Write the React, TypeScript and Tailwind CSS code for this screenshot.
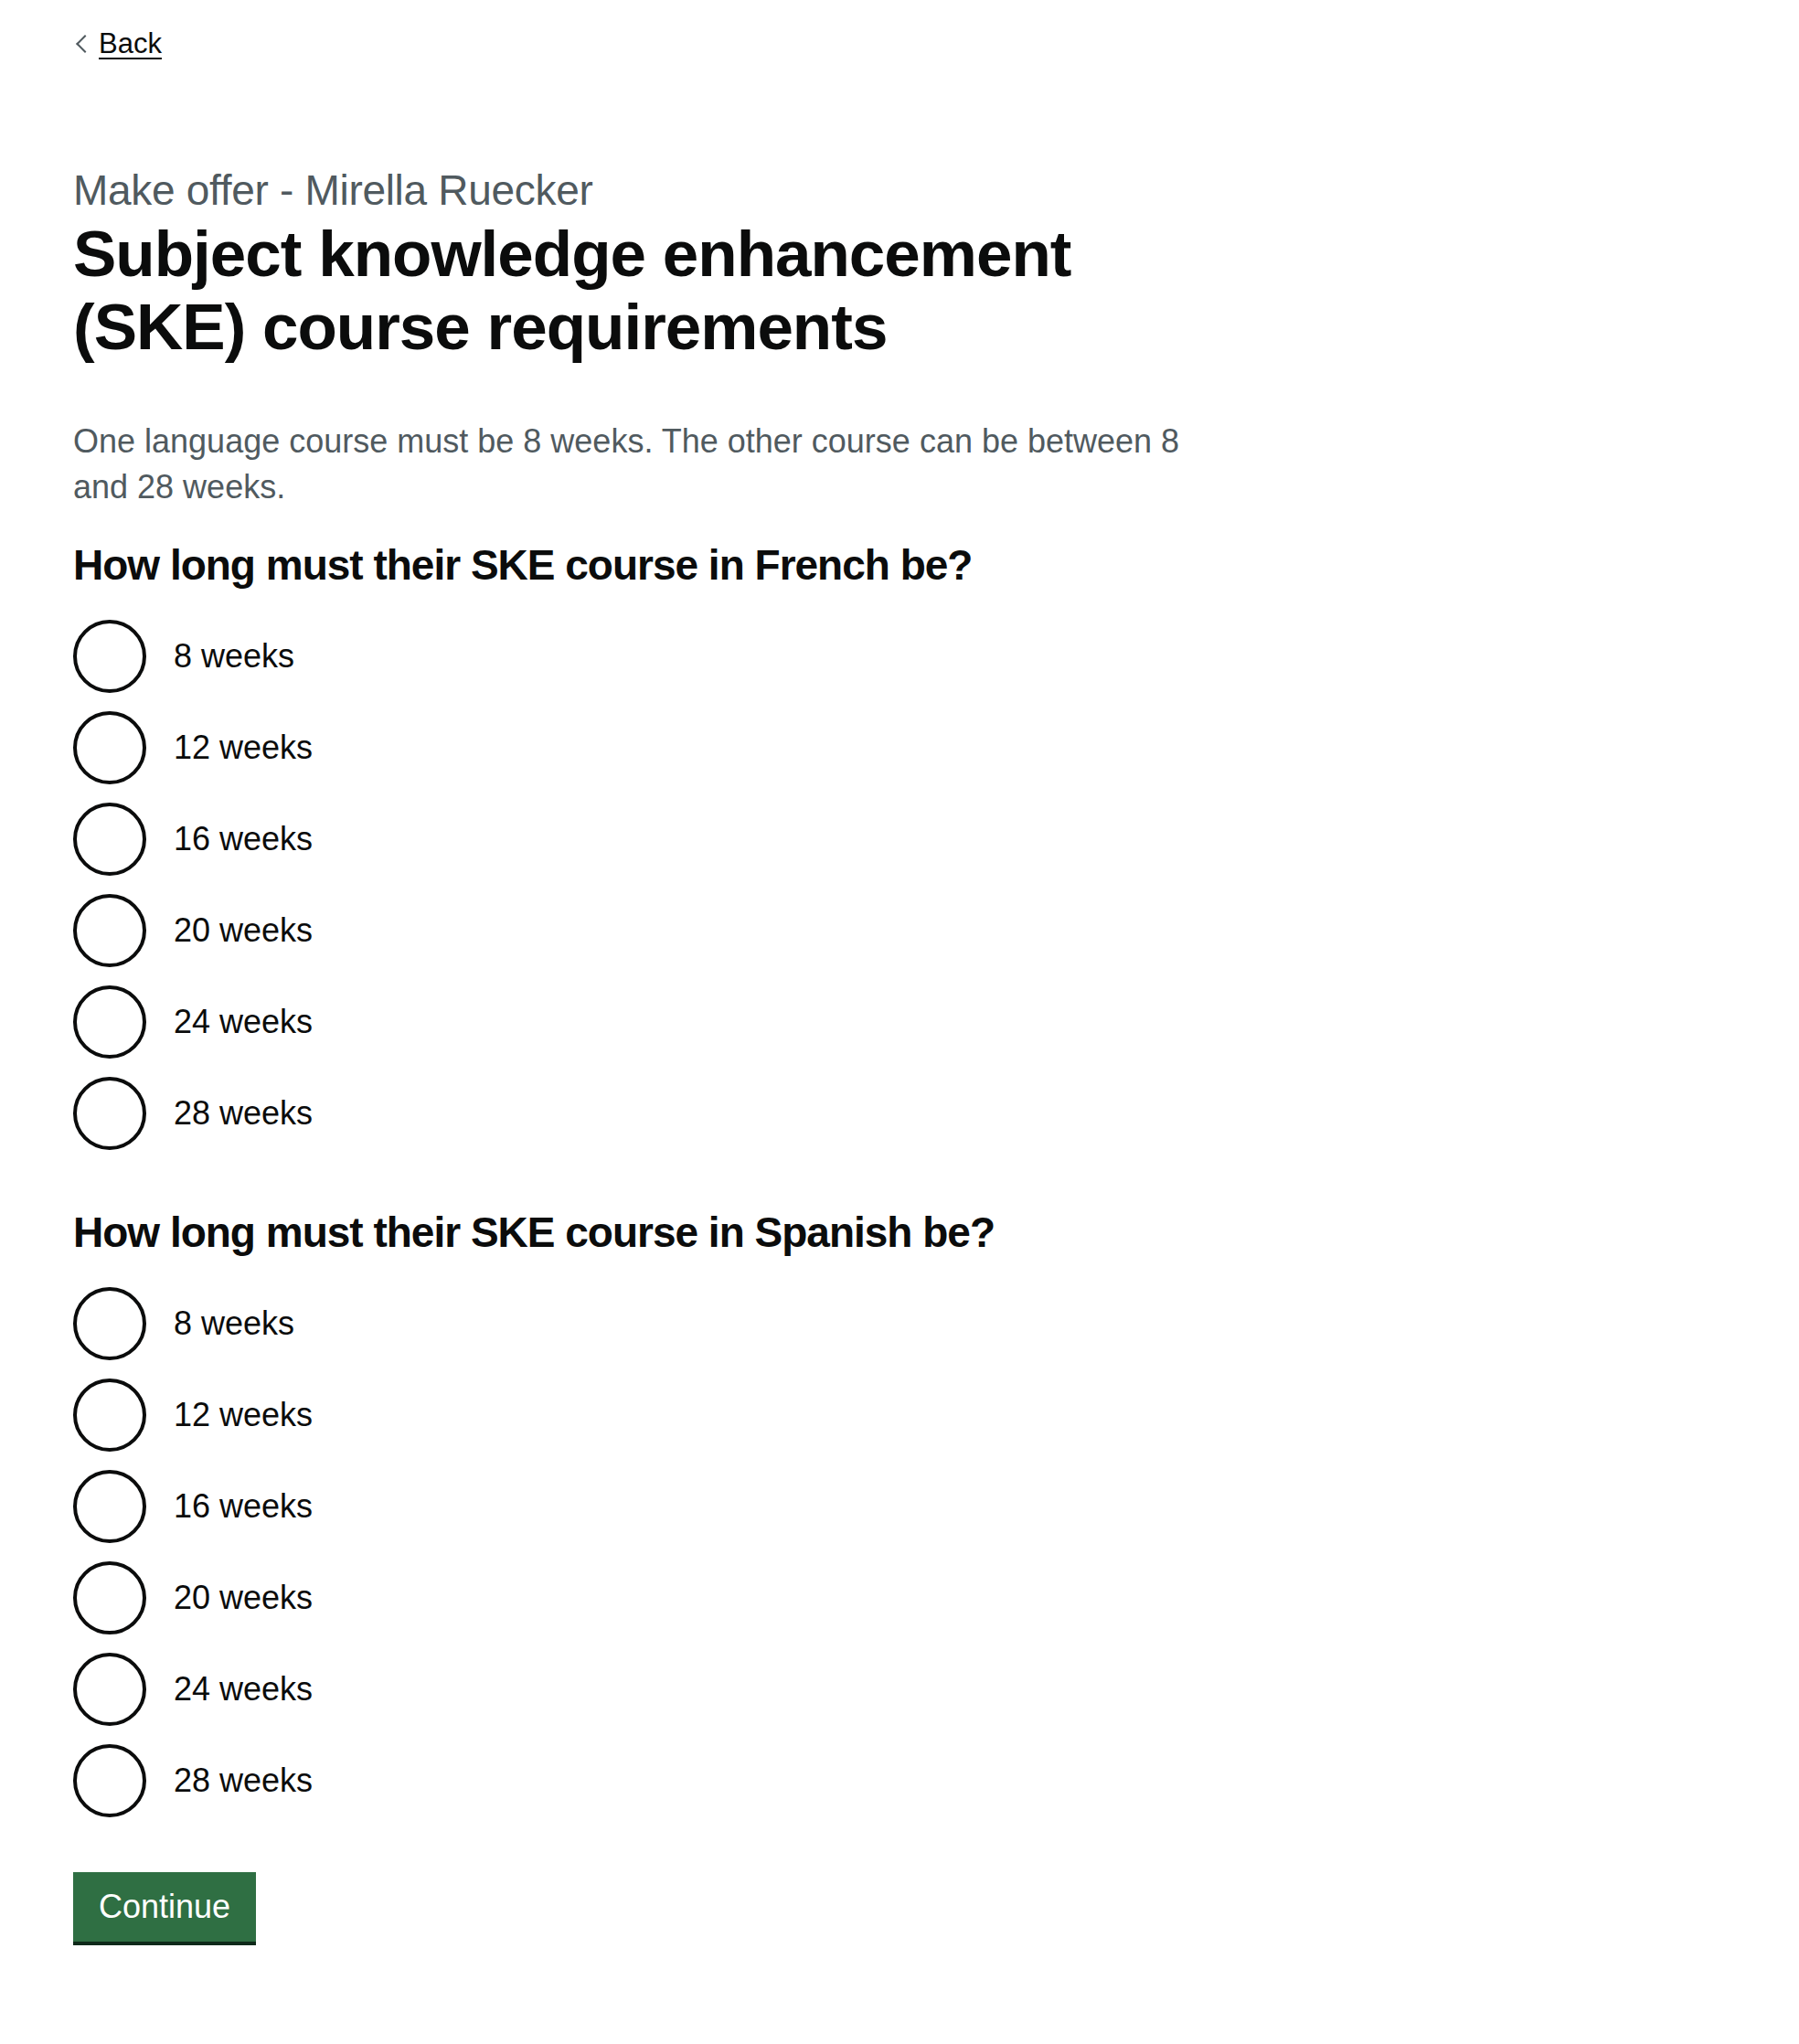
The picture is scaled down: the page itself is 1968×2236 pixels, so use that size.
const weeks = ['8 weeks', '12 weeks', '16 weeks', '20 weeks', '24 weeks', '28 weeks']

function RadioGroup({ name, legend }: { name: string; legend: string }) {
  return (
    <fieldset className="mb-[60px]">
      <legend className="mb-[30px] text-[46px] leading-[60px] font-bold tracking-[-1px] text-[#0b0c0c]">
        {legend}
      </legend>
      <div className="flex flex-col gap-[20px]">
        {weeks.map((w) => (
          <label key={w} className="flex items-center min-h-[80px] cursor-pointer">
            <input type="radio" name={name} className="sr-only peer" />
            <span className="w-[80px] h-[80px] rounded-full border-4 border-[#0b0c0c] bg-white shrink-0" />
            <span className="px-[30px] text-[36px] leading-[50px] text-[#0b0c0c]">{w}</span>
          </label>
        ))}
      </div>
    </fieldset>
  )
}

export default function App() {
  return (
    <div className="min-h-screen bg-white px-[80px] font-['Liberation_Sans',Arial,sans-serif]">
      <a href="#" className="relative inline-block mt-[28px] pl-[28px] text-[31px] leading-[40px] text-[#0b0c0c] underline decoration-2 underline-offset-[5px]">
        <span className="absolute left-[6px] top-0 bottom-0 my-auto w-[14px] h-[14px] border-t-2 border-r-2 border-[#505a5f] rotate-[225deg]" />
        Back
      </a>

      <main className="pt-[110px] pb-[100px] w-[1240px]">
        <span className="block mb-0 text-[46px] leading-[60px] tracking-[-0.3px] text-[#505a5f]">
          Make offer - Mirella Ruecker
        </span>
        <h1 className="mb-[60px] text-[71px] leading-[80px] font-bold tracking-[-1px] text-[#0b0c0c]">
          Subject knowledge enhancement (SKE) course requirements
        </h1>
        <p className="mb-[30px] text-[36px] leading-[50px] text-[#505a5f]">
          One language course must be 8 weeks. The other course can be between 8 and 28 weeks.
        </p>

        <RadioGroup name="french" legend="How long must their SKE course in French be?" />
        <RadioGroup name="spanish" legend="How long must their SKE course in Spanish be?" />

        <button className="h-[76px] px-[28px] bg-[#2f6f43] text-white text-[36px] leading-none shadow-[0_4px_0_#0f2a1a]">
          Continue
        </button>
      </main>
    </div>
  )
}
